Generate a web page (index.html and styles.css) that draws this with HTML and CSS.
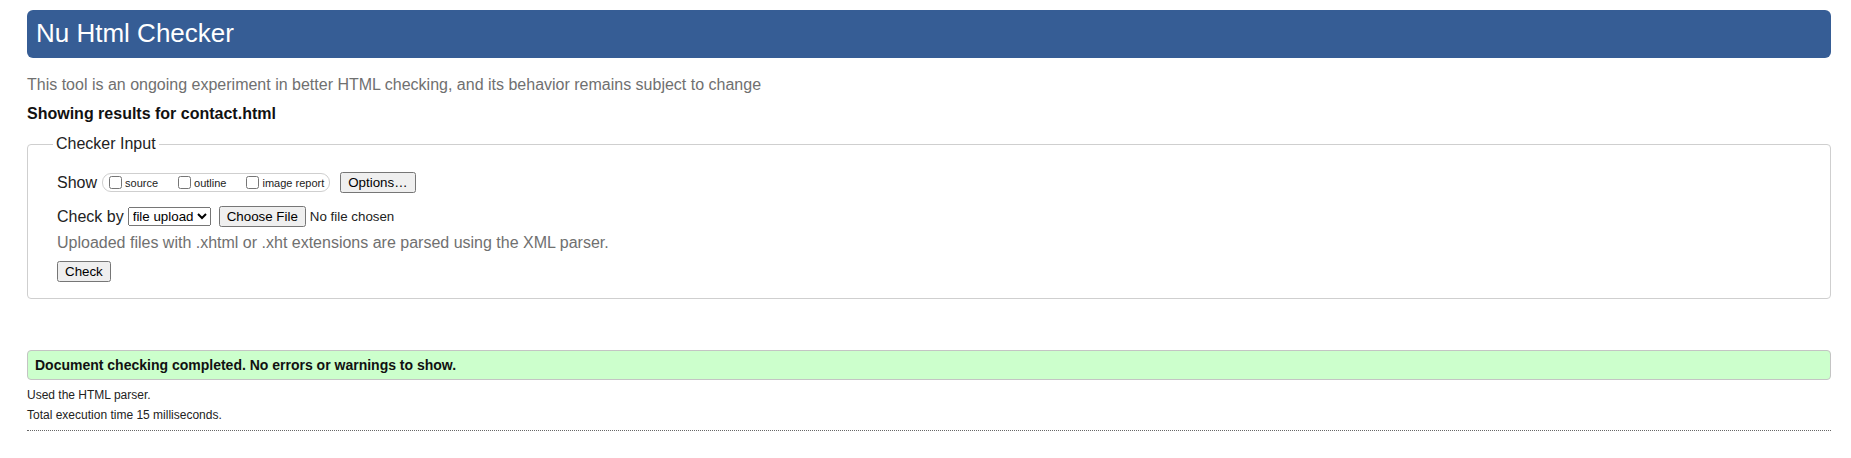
FILE: index.html
```html
<!DOCTYPE html>
<html lang="en">
<head>
<meta charset="utf-8">
<title>Nu Html Checker</title>
<link rel="stylesheet" href="styles.css">
</head>
<body>
<h1 class="title">Nu Html Checker</h1>
<p class="intro">This tool is an ongoing experiment in better HTML checking, and its behavior remains subject to change</p>
<p class="showing">Showing results for contact.html</p>
<form class="form">
  <fieldset class="checker">
    <legend class="legend">Checker Input</legend>
    <div class="row row-show">
      <span class="label">Show</span>
      <span class="group">
        <label class="opt"><input type="checkbox" class="cb">source</label>
        <label class="opt"><input type="checkbox" class="cb">outline</label>
        <label class="opt"><input type="checkbox" class="cb">image report</label>
      </span>
      <button type="button" class="btn btn-options">Options…</button>
    </div>
    <div class="row row-by">
      <span class="label">Check by</span>
      <select class="sel">
        <option>address</option>
        <option selected>file upload</option>
        <option>text input</option>
      </select>
      <input type="file" class="file">
    </div>
    <p class="hint">Uploaded files with .xhtml or .xht extensions are parsed using the XML parser.</p>
    <div class="row row-submit">
      <button type="submit" class="btn">Check</button>
    </div>
  </fieldset>
</form>
<p class="success">Document checking completed. No errors or warnings to show.</p>
<p class="meta">Used the HTML parser.</p>
<p class="meta meta-last">Total execution time 15 milliseconds.</p>
<hr class="rule">
</body>
</html>
```
FILE: styles.css
```css
html, body {
  background: #fff;
}
body {
  margin: 0;
  padding: 10px 20px 0 27px;
  font-family: "Liberation Sans", Arial, sans-serif;
  color: #222;
}
.title {
  margin: 0;
  height: 48px;
  box-sizing: border-box;
  padding: 0 0 2px 9px;
  line-height: 46px;
  background: #365d95;
  color: #fff;
  font-size: 26px;
  font-weight: normal;
  border-radius: 6px;
}
.intro {
  margin: 18px 0 0;
  font-size: 16px;
  color: #707070;
}
.showing {
  margin: 11px 0 0;
  font-size: 16px;
  font-weight: bold;
  color: #111;
}
.form {
  margin: 12px 0 0;
}
.checker {
  margin: 0;
  border: 1px solid #cfcfcf;
  border-radius: 4px;
  padding: 19px 0 16px 25px;
}
.legend {
  padding: 0 3px;
  font-size: 16px;
  line-height: 18px;
  color: #222;
}
.row {
  display: flex;
  align-items: center;
  height: 21px;
  padding-left: 4px;
  font-size: 16px;
}
.row-by {
  margin-top: 13px;
}
.label {
  margin-right: 5px;
}
.row-by .label {
  margin-right: 4px;
}
.group {
  display: flex;
  align-items: center;
  height: 17px;
  border: 1px solid #cfcfcf;
  border-radius: 9px;
  padding: 0 5px 0 0;
  font-size: 11px;
  margin-right: 10px;
}
.opt {
  display: flex;
  align-items: center;
  margin-right: 14px;
}
.opt:last-child {
  margin-right: 0;
}
.cb {
  margin: 0 3px 0 6px;
  width: 13px;
  height: 13px;
}
.btn {
  font-family: "Liberation Sans", Arial, sans-serif;
  font-size: 13.33px;
  margin: 0;
}
.btn-options {
  padding: 1px 6px;
}
.sel {
  font-family: "Liberation Sans", Arial, sans-serif;
  font-size: 13.33px;
  margin: 0 8px 0 0;
}
.file {
  font-family: "Liberation Sans", Arial, sans-serif;
  font-size: 13.33px;
}
.hint {
  margin: 7px 0 0;
  padding-left: 4px;
  font-size: 16px;
  color: #707070;
}
.row-submit {
  margin-top: 9px;
}
.success {
  margin: 51px 0 0;
  padding: 6px 7px;
  background: #ccffcc;
  border: 1px solid #c4c4c4;
  border-radius: 4px;
  font-size: 14px;
  font-weight: bold;
  color: #111;
}
.meta {
  margin: 8px 0 0;
  font-size: 12px;
  color: #222;
}
.meta-last {
  margin-top: 6px;
}
.rule {
  margin: 8px 0 0;
  border: 0;
  border-top: 1px dotted #666;
  height: 0;
}
```
